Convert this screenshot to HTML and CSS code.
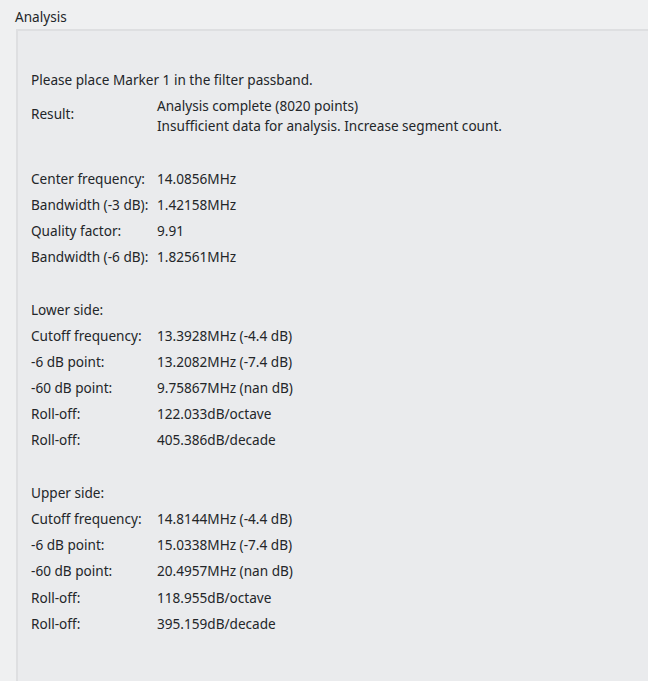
FILE: index.html
```html
<!DOCTYPE html>
<html>
<head>
<meta charset="utf-8">
<link rel="stylesheet" href="styles.css">
</head>
<body>
<div class="page">
  <div class="group-title">Analysis</div>
  <div class="group-box">
    <div class="form">
      <div class="full">Please place Marker 1 in the filter passband.</div>
      <div class="label result-label">Result:</div>
      <div class="value multi">Analysis complete (8020 points)<br>Insufficient data for analysis. Increase segment count.</div>
      <div class="spacer"></div>

      <div class="label">Center frequency:</div><div class="value">14.0856MHz</div>
      <div class="label">Bandwidth (-3 dB):</div><div class="value">1.42158MHz</div>
      <div class="label">Quality factor:</div><div class="value">9.91</div>
      <div class="label">Bandwidth (-6 dB):</div><div class="value">1.82561MHz</div>
      <div class="spacer"></div>

      <div class="full">Lower side:</div>
      <div class="label">Cutoff frequency:</div><div class="value">13.3928MHz (-4.4 dB)</div>
      <div class="label">-6 dB point:</div><div class="value">13.2082MHz (-7.4 dB)</div>
      <div class="label">-60 dB point:</div><div class="value">9.75867MHz (nan dB)</div>
      <div class="label">Roll-off:</div><div class="value">122.033dB/octave</div>
      <div class="label">Roll-off:</div><div class="value">405.386dB/decade</div>
      <div class="spacer"></div>

      <div class="full">Upper side:</div>
      <div class="label">Cutoff frequency:</div><div class="value">14.8144MHz (-4.4 dB)</div>
      <div class="label">-6 dB point:</div><div class="value">15.0338MHz (-7.4 dB)</div>
      <div class="label">-60 dB point:</div><div class="value">20.4957MHz (nan dB)</div>
      <div class="label">Roll-off:</div><div class="value">118.955dB/octave</div>
      <div class="label">Roll-off:</div><div class="value">395.159dB/decade</div>
    </div>
  </div>
</div>
</body>
</html>
```
FILE: styles.css
```css
html, body {
  margin: 0;
  padding: 0;
  background: #eff0f1;
  overflow: hidden;
  width: 648px;
  height: 681px;
}
.page {
  font-family: "Noto Sans", "DejaVu Sans", sans-serif;
  font-size: 13.6px;
  color: #232629;
  padding-top: 7px;
  width: 648px;
  height: 681px;
  box-sizing: border-box;
}
.group-title {
  height: 20px;
  line-height: 20px;
  padding-left: 15px;
}
.group-box {
  margin-top: 2px;
  margin-left: 16px;
  width: 632px;
  height: 652px;
  border-top: 2px solid #dedfe1;
  border-left: 2px solid #dedfe1;
  background: #eaebed;
  box-sizing: border-box;
  padding: 39px 0 0 13px;
}
.form {
  display: grid;
  grid-template-columns: 126px auto;
  grid-auto-rows: minmax(20px, auto);
  row-gap: 6.2px;
  line-height: 20px;
  justify-content: start;
}
.full {
  grid-column: 1 / 3;
}
.spacer {
  grid-column: 1 / 3;
  height: 20px;
}
.label {
  grid-column: 1;
  align-self: center;
}
.result-label {
  align-self: start;
  padding-top: 8px;
}
.value {
  grid-column: 2;
  white-space: nowrap;
}
```
